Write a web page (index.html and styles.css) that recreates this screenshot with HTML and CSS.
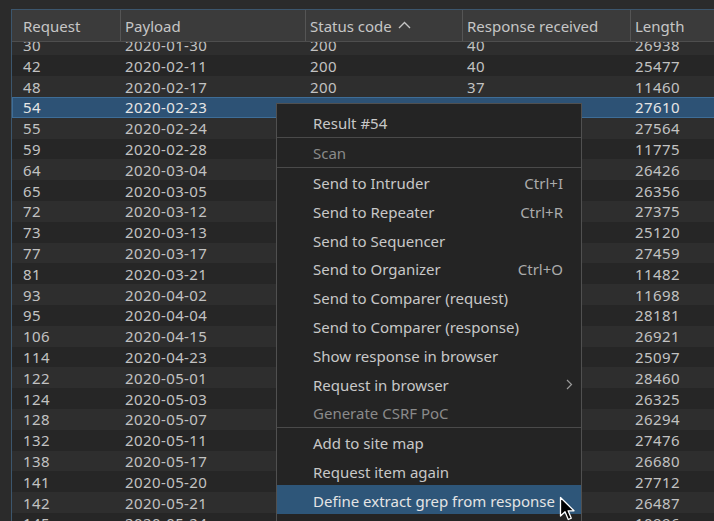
FILE: index.html
```html
<!DOCTYPE html>
<html>
<head>
<meta charset="utf-8">
<link rel="stylesheet" href="styles.css">
</head>
<body>
<div class="app">
  <div class="table">
    <div class="thead">
      <div class="th c1">Request</div>
      <div class="th">Payload</div>
      <div class="th">Status code <svg class="sort" width="13" height="8" viewBox="0 0 13 8"><polyline points="1,7 6.5,1.5 12,7" fill="none" stroke="#c4c4c4" stroke-width="1.4"/></svg></div>
      <div class="th">Response received</div>
      <div class="th">Length</div>
    </div>
    <div class="tbody">
      <div class="rows">
        <div class="tr"><div class="td c1">30</div><div class="td">2020-01-30</div><div class="td">200</div><div class="td">40</div><div class="td">26938</div></div>
        <div class="tr"><div class="td c1">42</div><div class="td">2020-02-11</div><div class="td">200</div><div class="td">40</div><div class="td">25477</div></div>
        <div class="tr"><div class="td c1">48</div><div class="td">2020-02-17</div><div class="td">200</div><div class="td">37</div><div class="td">11460</div></div>
        <div class="tr sel"><div class="td c1">54</div><div class="td">2020-02-23</div><div class="td">200</div><div class="td">41</div><div class="td">27610</div></div>
        <div class="tr"><div class="td c1">55</div><div class="td">2020-02-24</div><div class="td">200</div><div class="td">39</div><div class="td">27564</div></div>
        <div class="tr"><div class="td c1">59</div><div class="td">2020-02-28</div><div class="td">200</div><div class="td">36</div><div class="td">11775</div></div>
        <div class="tr"><div class="td c1">64</div><div class="td">2020-03-04</div><div class="td">200</div><div class="td">40</div><div class="td">26426</div></div>
        <div class="tr"><div class="td c1">65</div><div class="td">2020-03-05</div><div class="td">200</div><div class="td">38</div><div class="td">26356</div></div>
        <div class="tr"><div class="td c1">72</div><div class="td">2020-03-12</div><div class="td">200</div><div class="td">41</div><div class="td">27375</div></div>
        <div class="tr"><div class="td c1">73</div><div class="td">2020-03-13</div><div class="td">200</div><div class="td">39</div><div class="td">25120</div></div>
        <div class="tr"><div class="td c1">77</div><div class="td">2020-03-17</div><div class="td">200</div><div class="td">40</div><div class="td">27459</div></div>
        <div class="tr"><div class="td c1">81</div><div class="td">2020-03-21</div><div class="td">200</div><div class="td">36</div><div class="td">11482</div></div>
        <div class="tr"><div class="td c1">93</div><div class="td">2020-04-02</div><div class="td">200</div><div class="td">37</div><div class="td">11698</div></div>
        <div class="tr"><div class="td c1">95</div><div class="td">2020-04-04</div><div class="td">200</div><div class="td">42</div><div class="td">28181</div></div>
        <div class="tr"><div class="td c1">106</div><div class="td">2020-04-15</div><div class="td">200</div><div class="td">40</div><div class="td">26921</div></div>
        <div class="tr"><div class="td c1">114</div><div class="td">2020-04-23</div><div class="td">200</div><div class="td">39</div><div class="td">25097</div></div>
        <div class="tr"><div class="td c1">122</div><div class="td">2020-05-01</div><div class="td">200</div><div class="td">41</div><div class="td">28460</div></div>
        <div class="tr"><div class="td c1">124</div><div class="td">2020-05-03</div><div class="td">200</div><div class="td">40</div><div class="td">26325</div></div>
        <div class="tr"><div class="td c1">128</div><div class="td">2020-05-07</div><div class="td">200</div><div class="td">38</div><div class="td">26294</div></div>
        <div class="tr"><div class="td c1">132</div><div class="td">2020-05-11</div><div class="td">200</div><div class="td">41</div><div class="td">27476</div></div>
        <div class="tr"><div class="td c1">138</div><div class="td">2020-05-17</div><div class="td">200</div><div class="td">40</div><div class="td">26680</div></div>
        <div class="tr"><div class="td c1">141</div><div class="td">2020-05-20</div><div class="td">200</div><div class="td">39</div><div class="td">27712</div></div>
        <div class="tr"><div class="td c1">142</div><div class="td">2020-05-21</div><div class="td">200</div><div class="td">40</div><div class="td">26487</div></div>
        <div class="tr"><div class="td c1">145</div><div class="td">2020-05-24</div><div class="td">200</div><div class="td">36</div><div class="td">10996</div></div>
      </div>
    </div>
  </div>

  <div class="menu">
    <div class="mi top"><span>Result #54</span></div>
    <div class="sep"></div>
    <div class="mi dis"><span>Scan</span></div>
    <div class="sep"></div>
    <div class="mi"><span>Send to Intruder</span><span class="kb">Ctrl+I</span></div>
    <div class="mi"><span>Send to Repeater</span><span class="kb">Ctrl+R</span></div>
    <div class="mi"><span>Send to Sequencer</span></div>
    <div class="mi"><span>Send to Organizer</span><span class="kb">Ctrl+O</span></div>
    <div class="mi"><span>Send to Comparer (request)</span></div>
    <div class="mi"><span>Send to Comparer (response)</span></div>
    <div class="mi"><span>Show response in browser</span></div>
    <div class="mi"><span>Request in browser</span><svg class="chev" width="7" height="11" viewBox="0 0 7 11"><polyline points="1,1 5.5,5.5 1,10" fill="none" stroke="#9a9a9a" stroke-width="1.2"/></svg></div>
    <div class="mi dis"><span>Generate CSRF PoC</span></div>
    <div class="sep"></div>
    <div class="mi"><span>Add to site map</span></div>
    <div class="mi"><span>Request item again</span></div>
    <div class="mi hl"><span>Define extract grep from response</span></div>
    <div class="mi"><span>Copy URL</span></div>
  </div>

  <svg class="cursor" width="18" height="26" viewBox="0 0 18 26">
    <path d="M1.5 1.5 L1.5 20 L6 15.8 L9.3 23.5 L12.3 22.2 L9.1 14.8 L15 14.8 Z" fill="#000" stroke="#fff" stroke-width="1.3" stroke-linejoin="round"/>
  </svg>
</div>
</body>
</html>
```

FILE: styles.css
```css
html, body {
  margin: 0;
  padding: 0;
  height: 100%;
  overflow: hidden;
}
body {
  background: #2b2b2b;
  font-family: "Noto Sans", "Open Sans", sans-serif;
  font-size: 15px;
  color: #c2c2c2;
}
.app {
  position: relative;
  height: 521px;
  padding: 9px 0 0 11px;
  box-sizing: border-box;
  overflow: hidden;
}
.table {
  height: 512px;
  border-top: 1px solid #3c566d;
  border-left: 1px solid #3c566d;
  background: #2a2a2a;
  display: flex;
  flex-direction: column;
  width: 740px;
}
.thead,
.tr {
  display: grid;
  grid-template-columns: 109px 185px 157px 168px 1fr;
}
.thead {
  height: 31px;
  background: #3b3b3b;
  border-bottom: 1px solid #4e4e4e;
  flex: none;
}
.th {
  display: flex;
  align-items: center;
  padding: 0 0 0 4px;
  border-right: 1px solid #555;
  color: #c6c6c6;
  white-space: nowrap;
  box-sizing: border-box;
}
.th.c1 {
  padding-left: 11px;
}
.sort {
  margin-left: 6px;
  margin-top: -2px;
}
.tbody {
  flex: 1;
  overflow: hidden;
}
.rows {
  margin-top: -7.4px;
}
.tr {
  height: 20.8px;
  background: #262626;
}
.tr:nth-child(odd) {
  background: #2e2e2e;
}
.tr.sel {
  background: #2d5275;
  box-shadow: inset 0 0 0 1px #3e6d97;
  color: #e6e6e6;
}
.td {
  display: flex;
  align-items: center;
  padding: 1px 0 0 4px;
  white-space: nowrap;
  line-height: 1;
  letter-spacing: 0.4px;
  box-sizing: border-box;
}
.td.c1 {
  padding-left: 11px;
}

.menu {
  position: absolute;
  left: 276px;
  top: 103px;
  width: 306px;
  box-sizing: border-box;
  background: #242424;
  border: 1px solid #505050;
  padding-top: 4px;
  color: #c8c8c8;
}
.mi {
  height: 28.8px;
  display: flex;
  align-items: center;
  justify-content: space-between;
  padding: 2px 18px 0 36px;
  box-sizing: border-box;
  white-space: nowrap;
}
.mi.dis {
  color: #8a8a8a;
}
.mi.hl {
  background: #2e5679;
  color: #e4e4e4;
}
.kb {
  color: #ababab;
}
.chev {
  margin-right: -10px;
}
.sep {
  height: 1px;
  background: #4a4a4a;
}
.cursor {
  position: absolute;
  left: 559px;
  top: 496px;
}
```
